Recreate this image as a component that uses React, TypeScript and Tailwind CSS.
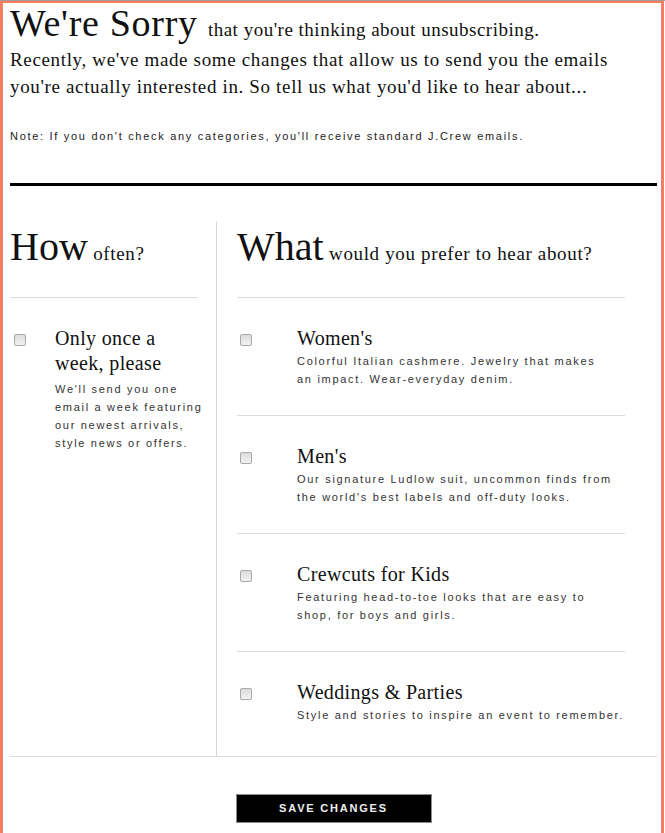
import React from "react";

const serif = "font-['Liberation_Serif','Times_New_Roman',serif]";
const sans = "font-['Liberation_Sans',Arial,sans-serif]";

function Box() {
  return (
    <span className="mt-[8px] block h-[12px] w-[12px] shrink-0 rounded-[2px] border border-[#a9a9a9] bg-gradient-to-b from-[#dcdcdc] to-[#f2f2f2]" />
  );
}

const items = [
  {
    title: "Women's",
    desc: ["Colorful Italian cashmere. Jewelry that makes", "an impact. Wear-everyday denim."],
  },
  {
    title: "Men's",
    desc: ["Our signature Ludlow suit, uncommon finds from", "the world's best labels and off-duty looks."],
  },
  {
    title: "Crewcuts for Kids",
    desc: ["Featuring head-to-toe looks that are easy to", "shop, for boys and girls."],
  },
  {
    title: "Weddings & Parties",
    desc: ["Style and stories to inspire an event to remember."],
  },
];

export default function App() {
  return (
    <div className="h-[833px] w-[665px] overflow-hidden border-t border-[#a89a98] bg-white">
      <div className="mr-[1px] h-full border-x-[3px] border-t-2 border-[#f47e5f] bg-white pl-[7px] pr-[4px] text-[#111]">
        <div className={`${serif} whitespace-nowrap text-[38px] leading-[40px] tracking-[0.7px]`}>
          We're Sorry{" "}
          <span className="text-[19px] leading-none tracking-[0.5px]">that you're thinking about unsubscribing.</span>
        </div>
        <p className={`${serif} mt-[3px] whitespace-nowrap text-[19px] leading-[27px] tracking-[0.65px]`}>
          Recently, we've made some changes that allow us to send you the emails
          <br />
          you're actually interested in. So tell us what you'd like to hear about...
        </p>
        <p className={`${sans} mt-[29px] whitespace-nowrap text-[11px] leading-[14px] tracking-[1.7px] text-[#222]`}>
          Note: If you don't check any categories, you'll receive standard J.Crew emails.
        </p>
        <div className="mt-[40px] h-[3px] bg-black" />

        <div className="mt-[36px] grid grid-cols-[207px_1fr] border-b border-[#dcdcdc]">
          <div className="border-r border-[#d6d6d6]">
            <div className={`${serif} mr-[18px] border-b border-[#dcdcdc] pb-[30px] pt-[5px] text-[40px] leading-[40px]`}>
              How<span className="text-[19px] leading-none tracking-[0.65px]"> often?</span>
            </div>
            <div className="flex pt-[28px] pl-[4px]">
              <Box />
              <div className="ml-[29px]">
                <div className={`${serif} whitespace-nowrap text-[20px] leading-[25px] tracking-[0.35px]`}>
                  Only once a
                  <br />
                  week, please
                </div>
                <div className={`${sans} mt-[4px] whitespace-nowrap text-[11px] leading-[18px] tracking-[1.7px] text-[#333]`}>
                  We'll send you one
                  <br />
                  email a week featuring
                  <br />
                  our newest arrivals,
                  <br />
                  style news or offers.
                </div>
              </div>
            </div>
          </div>

          <div className="pl-[20px] pr-[32px]">
            <div className={`${serif} border-b border-[#dcdcdc] pb-[30px] pt-[5px] text-[40px] leading-[40px]`}>
              What<span className="text-[19px] leading-none tracking-[0.65px]"> would you prefer to hear about?</span>
            </div>
            {items.map((it, i) => (
              <div
                key={it.title}
                className={`flex pl-[3px] pt-[28px] ${
                  i < items.length - 1 ? "border-b border-[#dcdcdc] pb-[27px]" : "pb-[32px]"
                }`}
              >
                <Box />
                <div className="ml-[45px] flex-1">
                  <div className={`${serif} text-[20px] leading-[24px] tracking-[0.35px]`}>{it.title}</div>
                  <div className={`${sans} mt-[2px] whitespace-nowrap text-[11px] leading-[18px] tracking-[1.7px] text-[#333]`}>
                    {it.desc.map((line, j) => (
                      <React.Fragment key={j}>
                        {j > 0 && <br />}
                        {line}
                      </React.Fragment>
                    ))}
                  </div>
                </div>
              </div>
            ))}
          </div>
        </div>

        <div className="flex justify-center pt-[37px]">
          <button
            className={`${sans} h-[29px] w-[196px] border border-[#8a8a8a] bg-black text-[11px] font-bold tracking-[1.8px] text-[#eee]`}
          >
            SAVE CHANGES
          </button>
        </div>
      </div>
    </div>
  );
}
